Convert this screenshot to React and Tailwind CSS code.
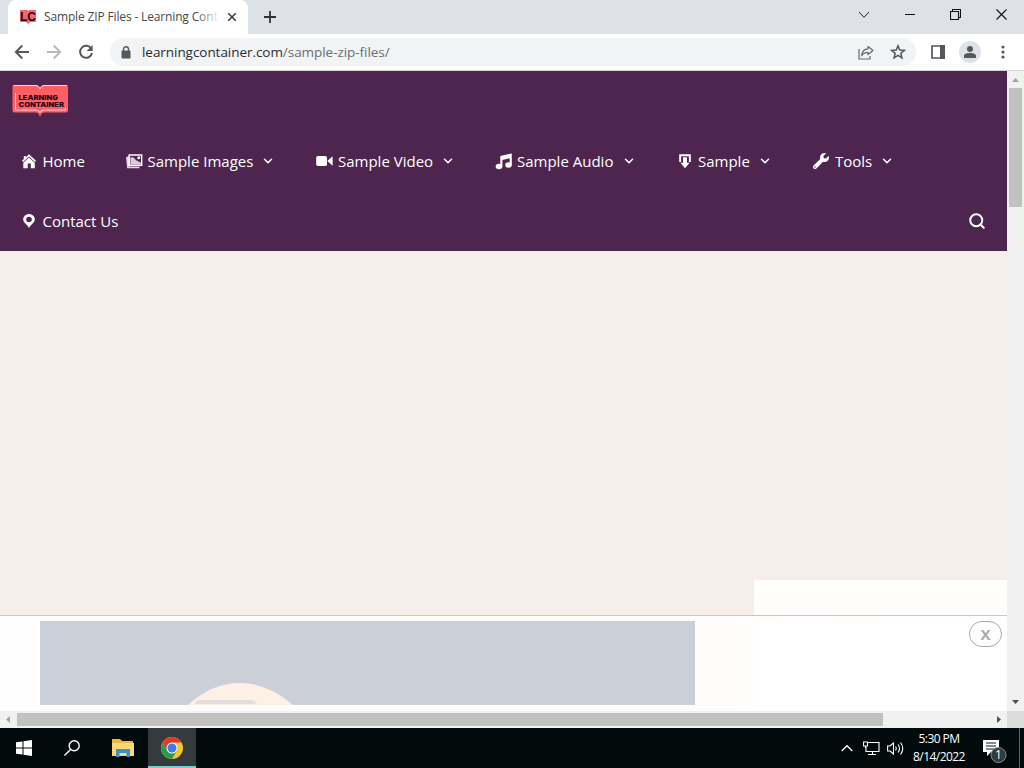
import { ChevronDown, Search } from 'lucide-react';

function HomeIcon() {
  return (
    <svg width="15" height="15" viewBox="0 0 15 15" fill="#fff">
      <path d="M7 0.3 14 6.7 12.9 7.9 7 2.6 1.1 7.9 0 6.7 1.8 5.1V2H3.8V3.2Z" />
      <path d="M7 3.6 12.8 8.8V14.2H8.800V9.500H5.700V14.2H1.300V8.800Z" />
    </svg>
  );
}

function ImagesIcon() {
  return (
    <svg width="18" height="15" viewBox="0 0 18 15" fill="none">
      <path d="M3.200 2 0 3.200 1.200 14.200H13.500V12.400H3.200Z" fill="#e2d5e4" />
      <path d="M3.200 1H15.700V11.200H3.200Z" stroke="#fff" strokeWidth="1.400" />
      <path d="M4.400 3.400 7 3.200 10.500 6.400 15 8.800V10.600H4.400Z" fill="#dccbdd" />
      <circle cx="12.800" cy="3.800" r="1.500" fill="#fff" />
    </svg>
  );
}

function VideoIcon() {
  return (
    <svg width="18" height="12" viewBox="0 0 18 12" fill="#fff">
      <rect x="0.2" y="1" width="10.8" height="10" rx="1.800" />
      <path d="M11.300 6 16.600 1.300V10.700Z" />
    </svg>
  );
}

function MusicIcon() {
  return (
    <svg width="18" height="17" viewBox="0 0 18 17" fill="#fff">
      <path d="M5.300 3 16.800 0.400V12H14.700V5.200L7.400 6.900V13.700H5.300Z" />
      <ellipse cx="4" cy="13.500" rx="3.300" ry="2.700" />
      <ellipse cx="13.500" cy="12" rx="3.300" ry="2.700" />
    </svg>
  );
}

function DownloadIcon() {
  return (
    <svg width="12" height="15" viewBox="0 0 12 15" fill="#fff">
      <path d="M0.200 0.200H11.800V8H9.900V2.200H2.100V8H0.200Z" />
      <path d="M4 3.300H8V8.700H10.600L6 14.300 1.400 8.700H4Z" />
    </svg>
  );
}

function WrenchIcon() {
  return (
    <svg width="16" height="16" viewBox="0 0 512 512" fill="#fff">
      <path d="M507.700 109.100c-2.200-9-13.500-12.100-20.100-5.500l-74.400 74.400-67.900-11.300L334 98.900l74.400-74.400c6.600-6.600 3.400-17.900-5.700-20.200-47.400-11.700-99.600.9-136.600 37.900-39.600 39.600-50.500 97.100-34.100 147.200L18.700 402.800c-25 25-25 65.500 0 90.500s65.500 25 90.500 0l213.200-213.200c50.100 16.700 107.500 5.700 147.400-34.200 37.100-37.100 49.700-89.300 37.900-136.800zM64 472a24 24 0 1 1 0-48 24 24 0 0 1 0 48z" />
    </svg>
  );
}

function PinIcon() {
  return (
    <svg width="14" height="15" viewBox="0 0 14 15" fill="#fff" fillRule="evenodd">
      <path d="M7 0C3.700 0 1.200 2.400 1.200 5.500 1.200 8.500 4.500 9.800 7 14 9.500 9.800 12.800 8.500 12.800 5.500 12.800 2.400 10.300 0 7 0ZM7 2.700A2.800 2.800 0 1 1 7 8.300 2.800 2.800 0 0 1 7 2.700Z" />
    </svg>
  );
}

const navItems = [
  { label: 'Home', icon: <HomeIcon />, item: 'w-[104px]', iconBox: 'w-[20.5px]', text: '' },
  { label: 'Sample Images', icon: <ImagesIcon />, item: 'w-[190px]', iconBox: 'w-[21.5px]', text: 'w-[113.5px]', menu: true },
  { label: 'Sample Video', icon: <VideoIcon />, item: 'w-[179px]', iconBox: 'w-[22px]', text: 'w-[103px]', menu: true },
  { label: 'Sample Audio', icon: <MusicIcon />, item: 'w-[184px]', iconBox: 'w-[22px]', text: 'w-[104.5px]', menu: true },
  { label: 'Sample', icon: <DownloadIcon />, item: 'w-[134px]', iconBox: 'w-[19px]', text: 'w-[60px]', menu: true },
  { label: 'Tools', icon: <WrenchIcon />, item: 'w-[104px]', iconBox: 'w-[22px]', text: 'w-[45px]', menu: true },
];

function TabStrip() {
  return (
    <div className="flex h-[34px] bg-[#dee1e6]">
      <div className="ml-2 flex w-[240px] items-center rounded-t-lg bg-white pl-3">
        <svg width="16" height="16" viewBox="0 0 16 16" className="shrink-0">
          <path d="M0 1H7L8 2 9 1H16V13H10L8 15 6 13H0Z" fill="#f6656b" />
          <text x="0" y="12" fontFamily="Liberation Sans" fontWeight="bold" fontSize="12.500" textLength="16" lengthAdjust="spacingAndGlyphs" fill="#24070b">LC</text>
        </svg>
        <div className="relative ml-2 w-[176px] whitespace-nowrap text-[12px] tracking-[-0.15px] text-[#45494d]">
          Sample ZIP Files - Learning Cont
          <div className="absolute inset-y-0 right-0 w-6 bg-gradient-to-r from-white/0 to-white" />
        </div>
        <svg width="10" height="10" viewBox="0 0 10 10" className="ml-[7px]">
          <path d="M1.200 1.200 8.800 8.800M8.800 1.200 1.200 8.800" stroke="#3c4043" strokeWidth="1.600" />
        </svg>
      </div>
      <svg width="12" height="12" viewBox="0 0 12 12" className="mt-[11px] ml-4">
        <path d="M6 0V12M0 6H12" stroke="#303336" strokeWidth="1.800" />
      </svg>
      <div className="mt-[9px] ml-auto flex h-[11px] items-center gap-[35px] pr-[17px]">
        <svg width="12" height="11" viewBox="0 0 12 11" fill="none" stroke="#222">
          <path d="M1 3 6 8.300 11 3" />
        </svg>
        <svg width="10" height="11" viewBox="0 0 10 11" stroke="#111">
          <path d="M0 5.500H10" />
        </svg>
        <svg width="11" height="11" viewBox="0 0 11 11" fill="none" stroke="#111" strokeWidth="1.100">
          <path d="M0.500 2.500H8.500V10.500H0.500ZM2.500 2.500V0.500H10.500V8.500H8.500" />
        </svg>
        <svg width="11" height="11" viewBox="0 0 11 11" stroke="#111" strokeWidth="1.100">
          <path d="M0.500 0.500 10.500 10.500M10.500 0.500 0.500 10.500" />
        </svg>
      </div>
    </div>
  );
}

function Toolbar() {
  return (
    <div className="flex h-[37px] items-center border-b border-[#d5d5d8] bg-white pl-[14px]">
      <svg width="16" height="16" viewBox="0 0 16 16" fill="none" stroke="#55585c" strokeWidth="1.900">
        <path d="M15 8H2M8.300 1.500 1.800 8 8.300 14.500" />
      </svg>
      <svg width="16" height="16" viewBox="0 0 16 16" fill="none" stroke="#b6b8bb" strokeWidth="1.900" className="ml-4">
        <path d="M1 8H14M7.700 1.500 14.200 8 7.700 14.500" />
      </svg>
      <svg width="16" height="16" viewBox="0 0 16 16" className="ml-4">
        <path d="M13.300 4.800A6 6 0 1 0 14 9" fill="none" stroke="#55585c" strokeWidth="2" />
        <path d="M14.700 1V7H8.700Z" fill="#55585c" />
      </svg>
      <div className="ml-4 flex h-7 w-[806px] items-center rounded-full bg-[#f1f3f4] pr-[10px] pl-[11px]">
        <svg width="10" height="13" viewBox="0 0 10 13">
          <rect x="0.500" y="4.500" width="9" height="8" rx="1" fill="#55585c" />
          <path d="M2.500 5V3.300A2.500 2.500 0 0 1 7.500 3.300V5" fill="none" stroke="#55585c" strokeWidth="1.400" />
        </svg>
        <span className="ml-[11px] text-[13.500px] tracking-[-0.05px] text-[#6a6e73]">
          <span className="text-[#2a2d31]">learningcontainer.com</span>/sample-zip-files/
        </span>
        <svg width="16" height="15" viewBox="0 0 16 15" fill="none" stroke="#65696d" strokeWidth="1.200" className="ml-auto">
          <path d="M1 4V14H12V11" />
          <path d="M10 1.500 15 5.500 10 9.500V7.300C7 7.300 5 8.300 3.700 10.800 4 6.500 6.500 4 10 3.800Z" strokeLinejoin="round" />
        </svg>
        <svg width="16" height="16" viewBox="0 0 24 24" fill="none" stroke="#55585c" strokeWidth="2.300" className="ml-4">
          <path d="M12 2.800 14.700 9 21.500 9.600 16.300 14 17.900 20.700 12 17.100 6.100 20.700 7.700 14 2.500 9.600 9.300 9Z" />
        </svg>
      </div>
      <svg width="14" height="14" viewBox="0 0 14 14" className="ml-[15px]">
        <path d="M1 1H13V13H1Z" fill="none" stroke="#55585c" strokeWidth="1.700" />
        <path d="M9 0H14V14H9Z" fill="#55585c" />
      </svg>
      <svg width="22" height="22" viewBox="0 0 22 22" className="ml-[14px]">
        <circle cx="11" cy="11" r="11" fill="#dee2e8" />
        <circle cx="11" cy="8" r="3" fill="#55585c" />
        <path d="M5 17V15C5 12.800 8 12 11 12S17 12.800 17 15V17Z" fill="#55585c" />
      </svg>
      <svg width="4" height="14" viewBox="0 0 4 14" fill="#55585c" className="ml-5">
        <circle cx="2" cy="2" r="1.600" />
        <circle cx="2" cy="7" r="1.600" />
        <circle cx="2" cy="12" r="1.600" />
      </svg>
    </div>
  );
}

function SiteLogo() {
  return (
    <svg width="56" height="34" viewBox="0 0 56 34" className="block">
      <path d="M2 1H24Q27 1 28 4 29 1 32 1H54Q56 1 56 3V26.500Q56 28.500 54 28.500H32Q29 28.500 28 33.500 27 28.500 24 28.500H2.500Q0.500 28.500 0.500 26.500V3Q0.500 1 2 1Z" fill="#ff5e62" />
      <path d="M1.500 1.500H24Q27 1.800 28 4.800 29 1.800 32 1.500H55M3.500 9V26H24Q27 26 28 28.500 29 26 32 26H53.500V24" fill="none" stroke="#ffd6d6" strokeWidth="1" />
      <g fontFamily="Inter" fontWeight="900" fontSize="6.500" fill="#2b0b1c">
        <text x="6.500" y="16" textLength="39.500" lengthAdjust="spacingAndGlyphs">LEARNING</text>
        <text x="6.500" y="22.900" textLength="45.500" lengthAdjust="spacingAndGlyphs">CONTAINER</text>
      </g>
    </svg>
  );
}

function SiteHeader() {
  return (
    <header className="h-[180px] bg-[#4e254f] text-[15px] text-white">
      <div className="h-[60px] pt-[13px] pl-3">
        <SiteLogo />
      </div>
      <nav className="flex h-[60px] items-center pl-[22px]">
        {navItems.map(({ label, icon, item, iconBox, text, menu }) => (
          <a key={label} className={`flex shrink-0 items-center whitespace-nowrap ${item}`}>
            <span className={`shrink-0 ${iconBox}`}>{icon}</span>
            <span className={`shrink-0 ${text}`}>{label}</span>
            {menu && <ChevronDown size={14} strokeWidth={2.6} className="shrink-0" />}
          </a>
        ))}
      </nav>
      <div className="flex h-[60px] items-center pr-[21px] pl-[22px]">
        <span className="w-[20.5px]"><PinIcon /></span>
        <span>Contact Us</span>
        <Search size={18} strokeWidth={2.6} className="ml-auto" />
      </div>
    </header>
  );
}

function AdBar() {
  return (
    <div className="absolute inset-x-0 bottom-0 flex h-[96px] justify-between border-t border-[#c9c7c5] bg-gradient-to-r from-[#fffefe] via-[#fffcfa] to-white pt-[5px]">
      <svg width="655" height="90" viewBox="0 0 655 90" className="ml-10">
        <path d="M0 0H655V84H0Z" fill="#cbd0d8" />
        <path d="M148 84Q172 62 200 62T253 84V90H148Z" fill="#fcf1e4" />
        <path d="M157 79H211Q216 80 217 83H155Z" fill="#e2dcdc" />
        <path d="M0 84H655V90H0Z" fill="#fefcfb" />
      </svg>
      <div className="h-full w-[253px] bg-white">
        <button className="mr-[5px] ml-auto flex h-[26px] w-[33px] items-center justify-center rounded-full border border-[#aaa] font-['Open_Sans'] text-[15px] font-bold text-[#aaa]">
          X
        </button>
      </div>
    </div>
  );
}

function VerticalScrollbar() {
  return (
    <div className="flex w-[17px] flex-col items-center bg-[#f1f1f1]">
      <svg width="17" height="17" viewBox="0 0 17 17" fill="#a3a3a3">
        <path d="M5 11 8.500 7 12 11Z" />
      </svg>
      <div className="h-[119px] w-[13px] bg-[#c1c1c1]" />
      <svg width="17" height="17" viewBox="0 0 17 17" fill="#505050" className="mt-auto">
        <path d="M5 6 8.500 10 12 6Z" />
      </svg>
    </div>
  );
}

function HorizontalScrollbar() {
  return (
    <div className="flex h-[17px] items-center bg-[#f1f1f1]">
      <svg width="17" height="17" viewBox="0 0 17 17" fill="#a3a3a3">
        <path d="M10 5 6 8.500 10 12Z" />
      </svg>
      <div className="h-[13px] w-[866px] bg-[#c1c1c1]" />
      <svg width="17" height="17" viewBox="0 0 17 17" fill="#505050" className="ml-auto">
        <path d="M7 5 11 8.500 7 12Z" />
      </svg>
      <div className="h-full w-[17px] bg-[#dcdcdc]" />
    </div>
  );
}

function ChromeLogo() {
  return (
    <svg width="22" height="22" viewBox="0 0 22 22">
      <circle cx="11" cy="11" r="11" fill="#f9c52f" />
      <path d="M1.500 5.500A11 11 0 0 1 20.500 5.500H11L6 14Z" fill="#e2392e" />
      <path d="M1.500 5.500A11 11 0 0 0 11 22L15.800 13.800 11 16 6.200 13.700Z" fill="#2b9b4b" />
      <circle cx="11" cy="11" r="5.500" fill="#fff" />
      <circle cx="11" cy="11" r="4.500" fill="#3c7cf0" />
    </svg>
  );
}

function Taskbar() {
  return (
    <div className="flex h-10 bg-[#020b0c] text-white">
      <div className="flex w-12 items-center justify-center">
        <svg width="16" height="16" viewBox="0 0 16 16" fill="#fff">
          <path d="M0 2.300 6.500 1.400V7.500H0ZM7.500 1.200 16 0V7.500H7.500ZM0 8.500H6.500V14.600L0 13.700ZM7.500 8.500H16V16L7.500 14.800Z" />
        </svg>
      </div>
      <div className="flex w-12 items-center justify-center">
        <svg width="16" height="16" viewBox="0 0 16 16" fill="none" stroke="#fff" strokeWidth="1.400">
          <circle cx="10.200" cy="5.800" r="5" />
          <path d="M6.600 9.400 0.500 15.500" />
        </svg>
      </div>
      <div className="flex w-[52px] items-center justify-center pl-[1px]">
        <svg width="22" height="18" viewBox="0 0 22 18">
          <path d="M0 0H8L10 2H21V17H0Z" fill="#eeb83c" />
          <path d="M0 4H22V17H0Z" fill="#fbd978" />
          <path d="M4 10H18V18H14.500V14H7.500V18H4Z" fill="#3f8fc8" />
        </svg>
      </div>
      <div className="flex w-12 items-center justify-center border-b-2 border-[#76d0d0] bg-[#343b3c] pt-0.5">
        <ChromeLogo />
      </div>
      <div className="ml-auto flex items-center">
        <svg width="12" height="8" viewBox="0 0 12 8" fill="none" stroke="#fff" strokeWidth="1.300">
          <path d="M0.700 7 6 1.700 11.300 7" />
        </svg>
        <svg width="17" height="15" viewBox="0 0 17 15" fill="none" stroke="#fff" strokeWidth="1.100" className="ml-[10px]">
          <path d="M5 1.500H16V10.500H3V6M9.500 10.500V13.500M5 13.500H13M0.500 1H4.500V5H0.500ZM2.500 5V7" />
        </svg>
        <svg width="17" height="15" viewBox="0 0 17 15" fill="none" stroke="#fff" strokeWidth="1.100" className="ml-[7px]">
          <path d="M0.600 5V10H3L6.500 13V2L3 5ZM8.500 5.500Q10 7.500 8.500 9.500M11 3.500Q14 7.500 11 11.500M13.500 1.500Q18 7.500 13.500 13.500" />
        </svg>
        <div className="ml-[4px] w-[62px] text-center text-[12px] leading-[18px] tracking-[-0.55px] whitespace-nowrap">
          <div>5:30 PM</div>
          <div>8/14/2022</div>
        </div>
        <svg width="26" height="26" viewBox="0 0 26 26" className="mt-[5px] ml-[11px]">
          <path d="M2 2H18V14H10L6 18V14H2Z" fill="#fff" />
          <path d="M5 5H15M5 8H15M5 11H13" stroke="#0a1718" />
          <circle cx="17.500" cy="17" r="7.500" fill="#343a3b" stroke="#858b8c" />
          <text x="17.500" y="21" textAnchor="middle" fontFamily="Open Sans" fontSize="12" fill="#fff">1</text>
        </svg>
        <div className="ml-[12px] h-10 w-[5px] border-l border-[#5c6768]" />
      </div>
    </div>
  );
}

export default function App() {
  return (
    <div className="h-[768px] w-[1024px] overflow-hidden bg-white font-['Open_Sans',sans-serif]">
      <TabStrip />
      <Toolbar />
      <div className="flex h-[640px]">
        <main className="relative flex w-[1007px] flex-col bg-[#f5eeea]">
          <SiteHeader />
          <div className="mt-auto ml-auto h-[131px] w-[253px] bg-[#fffefd]" />
          <AdBar />
        </main>
        <VerticalScrollbar />
      </div>
      <HorizontalScrollbar />
      <Taskbar />
    </div>
  );
}
